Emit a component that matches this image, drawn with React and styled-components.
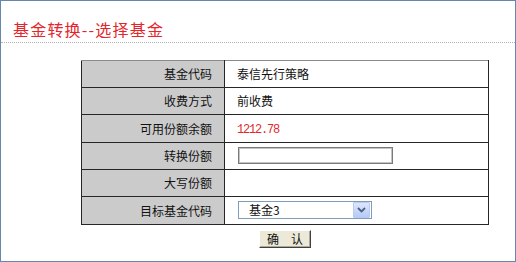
import React from "react";
import styled, { createGlobalStyle } from "styled-components";

const GlobalStyle = createGlobalStyle`
  html, body {
    margin: 0;
    padding: 0;
    background: #fff;
  }
  body {
    font-family: "Noto Sans CJK SC", "Liberation Sans", sans-serif;
    font-size: 12px;
    color: #222;
  }
`;

const rows = [
  { label: "基金代码", value: "泰信先行策略" },
  { label: "收费方式", value: "前收费" },
  { label: "可用份额余额", value: "1212.78", kind: "amount" },
  { label: "转换份额", kind: "input" },
  { label: "大写份额", value: "" },
  { label: "目标基金代码", kind: "select" },
];

const App = () => {
  const renderValue = (row) => {
    if (row.kind === "input") return <TextInput type="text" />;
    if (row.kind === "select") {
      return (
        <SelectBox>
          <Select defaultValue="3">
            <option value="1">基金1</option>
            <option value="2">基金2</option>
            <option value="3">基金3</option>
          </Select>
          <DropButton>
            <svg width="9" height="6" viewBox="0 0 9 6">
              <path d="M1 1 L4.5 4.5 L8 1" fill="none" stroke="#4d6185" strokeWidth="1.8" />
            </svg>
          </DropButton>
        </SelectBox>
      );
    }
    if (row.kind === "amount") return <Amount>{row.value}</Amount>;
    return row.value;
  };

  return (
    <Frame>
      <GlobalStyle />
      <Header>
        <Title>基金转换--选择基金</Title>
      </Header>
      <Form>
        <tbody>
          {rows.map((row) => (
            <tr key={row.label}>
              <LabelCell>{row.label}</LabelCell>
              <ValueCell>{renderValue(row)}</ValueCell>
            </tr>
          ))}
        </tbody>
      </Form>
      <Actions>
        <ConfirmButton type="button">确　认</ConfirmButton>
      </Actions>
    </Frame>
  );
};

export default App;

const Frame = styled.div`
  width: 516px;
  height: 262px;
  box-sizing: border-box;
  border: 1px solid #6786ad;
`;

const Header = styled.div`
  height: 42px;
  box-sizing: border-box;
  padding: 0 0 5px 12px;
  display: flex;
  align-items: flex-end;
  border-bottom: 1px dotted #b4b4b4;
`;

const Title = styled.h1`
  margin: 0;
  font-size: 16px;
  line-height: 16px;
  font-weight: normal;
  color: #e3262b;
  letter-spacing: 1.2px;
`;

const Form = styled.table`
  margin: 17px 0 0 80px;
  width: 408px;
  height: 165px;
  border-collapse: collapse;
  border-top: 1px solid #8a8a8a;

  td {
    border: 1px solid #262626;
    padding: 0;
  }
  tr:first-child td {
    border-top-color: #8a8a8a;
  }
`;

const LabelCell = styled.td`
  width: 130px;
  background: #cbcbcb;
  text-align: right;
  padding-right: 12px !important;
  color: #111;
`;

const ValueCell = styled.td`
  padding-left: 12px !important;
  color: #111;
`;

const Amount = styled.span`
  font-family: "Liberation Mono", monospace;
  font-size: 12px;
  letter-spacing: -1.2px;
  color: #e02b2b;
`;

const TextInput = styled.input`
  display: block;
  width: 155px;
  height: 17px;
  box-sizing: border-box;
  margin: 0 0 0 1px;
  border: 1px solid #7a7a7a;
  box-shadow: inset 0 0 0 1px #c4c4c4;
  outline: none;
`;

const SelectBox = styled.div`
  display: flex;
  align-items: center;
  width: 134px;
  height: 18px;
  margin-left: 1px;
  box-sizing: border-box;
  border: 1px solid #7f9db9;
  background: #fff;
`;

const Select = styled.select`
  flex: 1;
  min-width: 0;
  height: 16px;
  border: none;
  padding: 0 0 0 10px;
  appearance: none;
  background: transparent;
  font-family: "Noto Sans CJK SC", sans-serif;
  font-size: 12px;
  line-height: 16px;
  color: #111;
  outline: none;
`;

const DropButton = styled.span`
  display: flex;
  align-items: center;
  justify-content: center;
  width: 15px;
  height: 14px;
  margin-right: 1px;
  border: 1px solid #b9cbf2;
  border-radius: 1px;
  background: linear-gradient(#dce6fd, #b6caf6);
`;

const Actions = styled.div`
  width: 408px;
  margin-left: 80px;
  padding-top: 5px;
  display: flex;
  justify-content: center;
`;

const ConfirmButton = styled.button`
  width: 52px;
  height: 18px;
  padding: 0;
  box-sizing: border-box;
  background: #ece9d8;
  border: 1px solid;
  border-color: #fff #404040 #404040 #fff;
  box-shadow: inset -1px -1px 0 #aca899;
  font-family: "Noto Sans CJK SC", sans-serif;
  font-size: 12px;
  line-height: 14px;
  color: #111;
`;
